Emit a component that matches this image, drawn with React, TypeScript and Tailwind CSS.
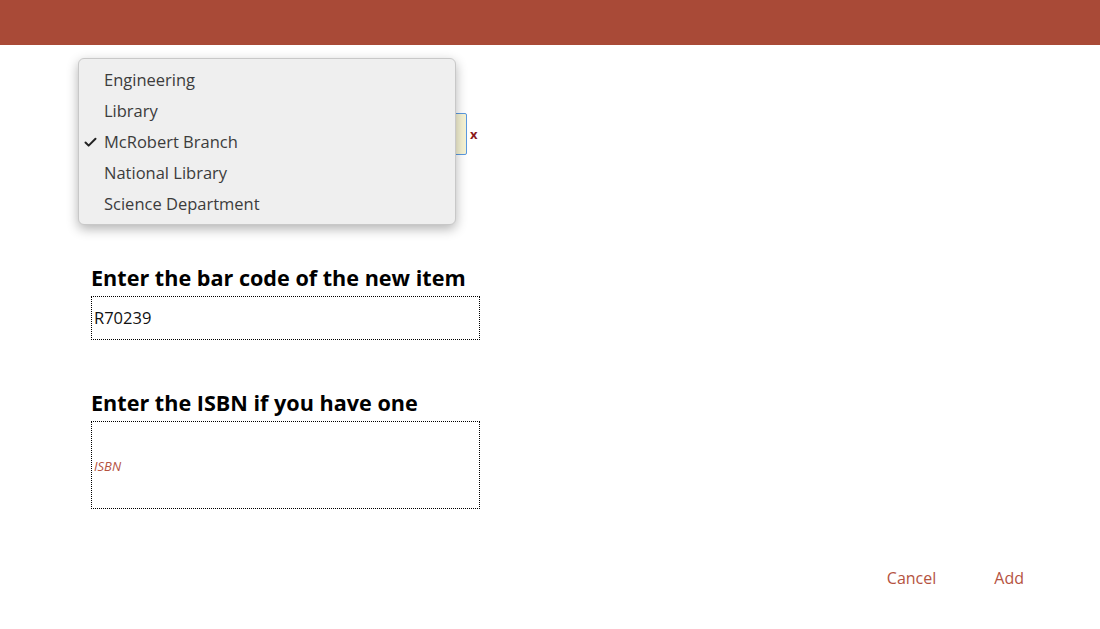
import { Check } from 'lucide-react';

const branches = ['Engineering', 'Library', 'McRobert Branch', 'National Library', 'Science Department'];

const App = () => {
  return (
    <div className="relative h-[629px] w-[1100px] bg-white font-['Open_Sans',sans-serif] overflow-hidden">
      <header className="h-[45px] bg-[#a94a37]" />

      <main className="pl-[91px] pr-[76px]">
        {/* branch select, covered by its open menu */}
        <div className="mt-[68px] flex items-center gap-[3px]">
          <div className="h-[42px] w-[376px] rounded-[2px] border border-[#5b9ae0] bg-[#f6f3d4]" />
          <span className="text-[13px] font-bold leading-none text-[#8b1a1a]">x</span>
        </div>

        <h2 className="mt-[108px] text-[21.6px] font-bold leading-[30px] text-black">Enter the bar code of the new item</h2>
        <div className="mt-[3px] flex h-[44px] w-[389px] items-center border border-dotted border-black px-[2px] pt-[1px]">
          <span className="text-[16.5px] text-[#111]">R70239</span>
        </div>

        <h2 className="mt-[48px] text-[21.6px] font-bold leading-[30px] text-black">Enter the ISBN if you have one</h2>
        <div className="mt-[3px] flex h-[88px] w-[389px] items-center border border-dotted border-black px-[2px] pt-[3px]">
          <span className="text-[13px] italic text-[#b5533f]">ISBN</span>
        </div>

        <div className="mt-[57px] flex justify-end gap-[58px]">
          <button className="text-[16px] text-[#b5533f]">Cancel</button>
          <button className="text-[16px] text-[#b5533f]">Add</button>
        </div>
      </main>

      <ul className="absolute left-[78px] top-[58px] w-[378px] rounded-[6px] border border-[#c8c8c8] bg-[#efefef] pt-[6px] pb-[4px] shadow-[0_4px_12px_rgba(0,0,0,0.3)]">
        {branches.map((b) => (
          <li key={b} className="flex h-[31px] items-center text-[16.5px] text-[#3c3c3c]">
            <span className="flex w-[25px] justify-end pr-[6px]">
              {b === 'McRobert Branch' && <Check size={15} strokeWidth={3.2} className="text-[#222]" />}
            </span>
            {b}
          </li>
        ))}
      </ul>
    </div>
  );
};

export default App;
